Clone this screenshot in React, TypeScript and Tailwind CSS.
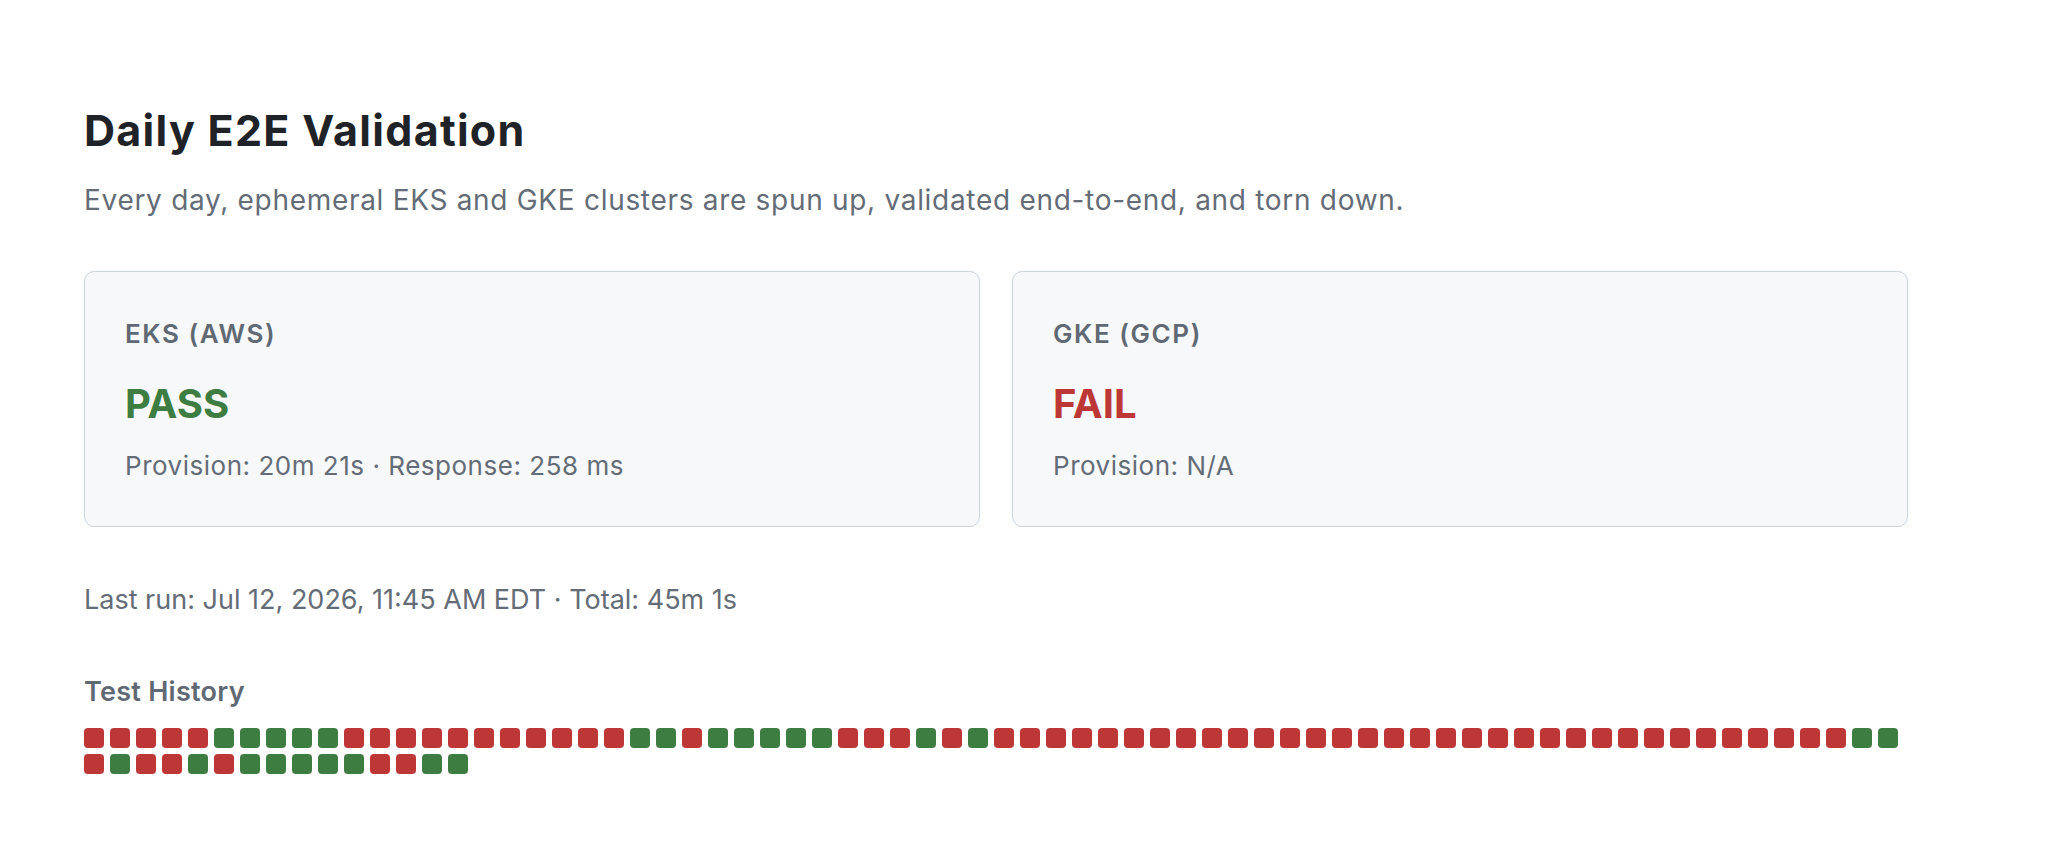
import React from "react";

type Outcome = "pass" | "fail";

// Run history, oldest first: p = pass, f = fail
const HISTORY_STR =
  "fffffppppp" +
  "fffffffffff" +
  "ppfpppppfffpfp" +
  "fffffffffffffffffffffffffffffffff" +
  "pp" +
  "fpffpfpppppffpp";

const history: Outcome[] = HISTORY_STR.split("").map((c) =>
  c === "p" ? "pass" : "fail"
);

type Cluster = {
  name: string;
  status: Outcome;
  detail: string;
};

const clusters: Cluster[] = [
  {
    name: "EKS (AWS)",
    status: "pass",
    detail: "Provision: 20m 21s · Response: 258 ms",
  },
  {
    name: "GKE (GCP)",
    status: "fail",
    detail: "Provision: N/A",
  },
];

function ClusterCard({ cluster }: { cluster: Cluster }) {
  const pass = cluster.status === "pass";
  return (
    <div className="rounded-[10px] border border-[#ccd3db] bg-[#f6f8fa] px-[40px] pt-[40px] pb-[42px]">
      <div className="text-[26px] leading-[44px] font-semibold tracking-[0.06em] text-[#5f6873]">
        {cluster.name}
      </div>
      <div
        className={
          "mt-[26px] text-[40px] leading-[44px] font-bold " +
          (pass ? "text-[#3e7d41]" : "text-[#be3737]")
        }
      >
        {pass ? "PASS" : "FAIL"}
      </div>
      <div className="mt-[22px] text-[26px] leading-[36px] tracking-[0.02em] text-[#646c77]">
        {cluster.detail}
      </div>
    </div>
  );
}

export default function App() {
  return (
    <div
      className="min-h-screen bg-white"
      style={{ fontFamily: "Inter, 'Noto Sans', 'Liberation Sans', sans-serif" }}
    >
      <div className="ml-[84px] w-[1824px] pt-[106px] pb-[60px]">
        <h2 className="text-[43px] leading-[48px] font-bold text-[#1f2328] tracking-[0.03em]">
          Daily E2E Validation
        </h2>
        <p className="mt-[26px] text-[28px] leading-[40px] tracking-[0.025em] text-[#646c77]">
          Every day, ephemeral EKS and GKE clusters are spun up, validated
          end-to-end, and torn down.
        </p>

        <div className="mt-[51px] grid grid-cols-2 gap-[32px]">
          {clusters.map((c) => (
            <ClusterCard key={c.name} cluster={c} />
          ))}
        </div>

        <p className="mt-[53px] text-[27px] leading-[40px] text-[#646c77]">
          Last run: Jul 12, 2026, 11:45 AM EDT · Total: 45m 1s
        </p>

        <h3 className="mt-[54px] text-[27px] leading-[36px] font-semibold tracking-[0.01em] text-[#5f6873]">
          Test History
        </h3>
        <div className="mt-[18px] flex flex-wrap gap-[6px]">
          {history.map((h, i) => (
            <span
              key={i}
              className={
                "block h-[20px] w-[20px] rounded-[4px] " +
                (h === "pass" ? "bg-[#3e7d41]" : "bg-[#be3737]")
              }
            />
          ))}
        </div>
      </div>
    </div>
  );
}
